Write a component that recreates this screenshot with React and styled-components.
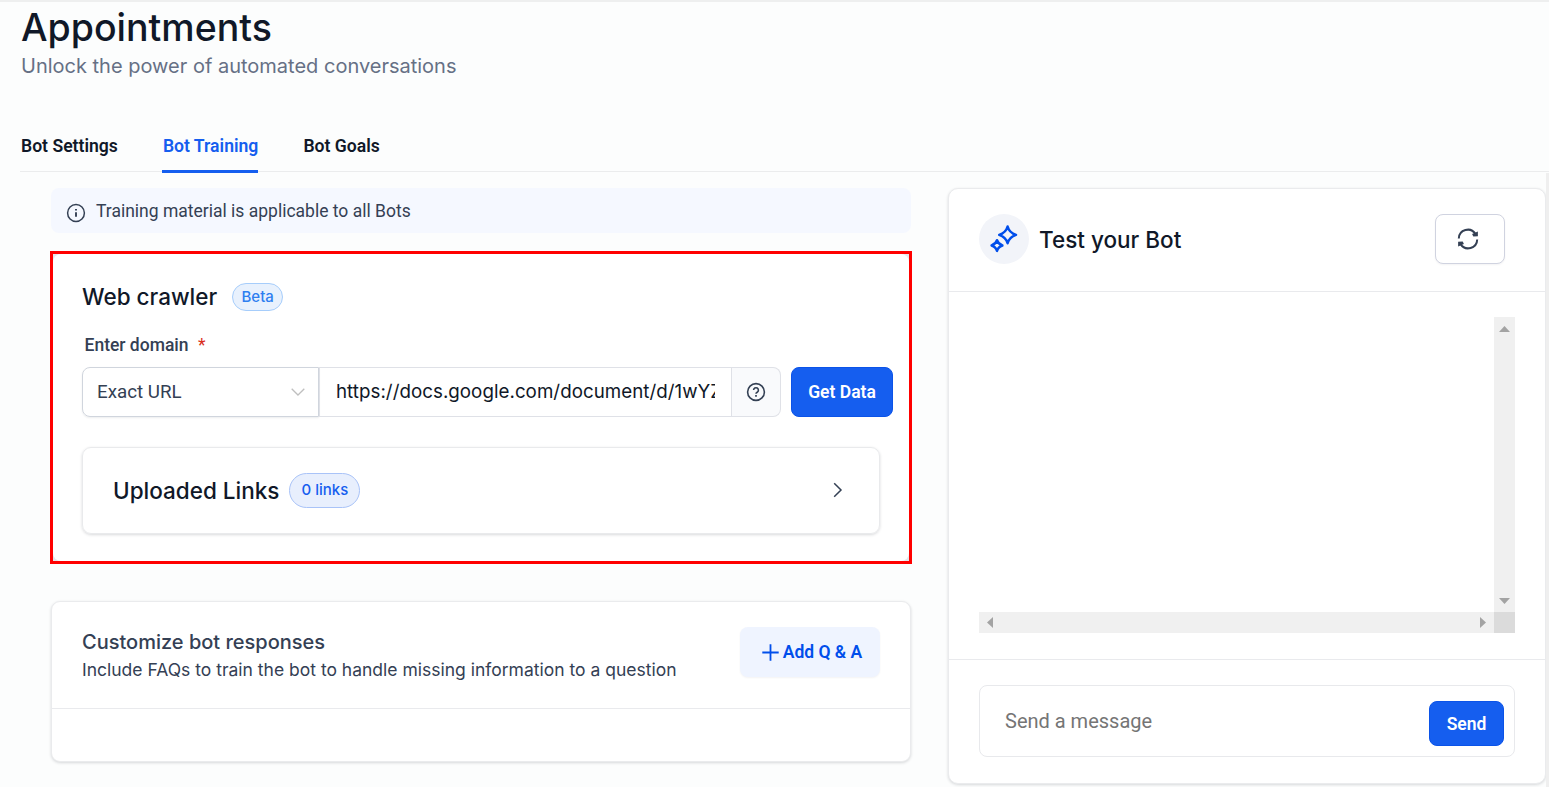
import React, { useState } from "react";
import styled, { createGlobalStyle } from "styled-components";

const TABS = ["Bot Settings", "Bot Training", "Bot Goals"];

function App() {
    const [activeTab, setActiveTab] = useState("Bot Training");
    const [message, setMessage] = useState("");

    return (
        <Page>
            <GlobalStyle />
            <Header>
                <Title>Appointments</Title>
                <Subtitle>Unlock the power of automated conversations</Subtitle>
            </Header>
            <TabBar>
                {TABS.map((tab) => (
                    <Tab
                        key={tab}
                        $active={tab === activeTab}
                        onClick={() => setActiveTab(tab)}
                    >
                        {tab}
                    </Tab>
                ))}
            </TabBar>
            <Content>
                <TrainingColumn>
                    <Notice>
                        <InfoIcon />
                        <span>Training material is applicable to all Bots</span>
                    </Notice>
                    <Highlight>
                        <CrawlerCard>
                            <CrawlerHeading>
                                <SectionTitle>Web crawler</SectionTitle>
                                <BetaBadge>Beta</BetaBadge>
                            </CrawlerHeading>
                            <FieldLabel>
                                Enter domain <Required>*</Required>
                            </FieldLabel>
                            <DomainRow>
                                <Select>
                                    <span>Exact URL</span>
                                    <ChevronDown />
                                </Select>
                                <UrlBox>
                                    <UrlInput
                                        readOnly
                                        value="https://docs.google.com/document/d/1wYZ"
                                    />
                                </UrlBox>
                                <HelpButton>
                                    <HelpIcon />
                                </HelpButton>
                                <GetDataButton>Get Data</GetDataButton>
                            </DomainRow>
                            <LinksCard>
                                <SectionTitle>Uploaded Links</SectionTitle>
                                <LinksBadge>0 links</LinksBadge>
                                <ChevronRight />
                            </LinksCard>
                        </CrawlerCard>
                    </Highlight>
                    <ResponsesCard>
                        <ResponsesHeader>
                            <div>
                                <ResponsesTitle>Customize bot responses</ResponsesTitle>
                                <ResponsesText>
                                    Include FAQs to train the bot to handle missing
                                    information to a question
                                </ResponsesText>
                            </div>
                            <AddButton>
                                <PlusIcon />
                                <span>Add Q &amp; A</span>
                            </AddButton>
                        </ResponsesHeader>
                    </ResponsesCard>
                </TrainingColumn>
                <TestPanel>
                    <PanelHeader>
                        <SparkleCircle>
                            <SparkleIcon />
                        </SparkleCircle>
                        <PanelTitle>Test your Bot</PanelTitle>
                        <RefreshButton>
                            <RefreshIcon />
                        </RefreshButton>
                    </PanelHeader>
                    <PanelBody>
                        <ChatArea>
                            <ChatView />
                            <ScrollTrack $vertical>
                                <Arrow direction="up" />
                                <Arrow direction="down" />
                            </ScrollTrack>
                            <ScrollTrack>
                                <Arrow direction="left" />
                                <Arrow direction="right" />
                            </ScrollTrack>
                            <ScrollCorner />
                        </ChatArea>
                    </PanelBody>
                    <PanelFooter>
                        <MessageBox>
                            <MessageInput
                                placeholder="Send a message"
                                value={message}
                                onChange={(e) => setMessage(e.target.value)}
                            />
                            <SendButton>Send</SendButton>
                        </MessageBox>
                    </PanelFooter>
                </TestPanel>
                <PageTrack />
            </Content>
        </Page>
    );
}

const InfoIcon = () => (
    <svg width="20" height="20" viewBox="0 0 20 20" fill="none" stroke="#344054">
        <circle cx="10" cy="10" r="8.4" strokeWidth="1.5" />
        <path d="M10 9.2v4.6" strokeWidth="1.9" />
        <path d="M10 5.9v1.6" strokeWidth="1.9" />
    </svg>
);

const HelpIcon = () => (
    <svg
        width="20"
        height="20"
        viewBox="0 0 20 20"
        fill="none"
        stroke="#344054"
        strokeWidth="1.6"
    >
        <circle cx="10" cy="10" r="8.4" />
        <path d="M7.6 8.1a2.4 2.4 0 1 1 3.6 2.1c-.8.45-1.2.8-1.2 1.6" />
        <path d="M10 13.1v1.6" strokeWidth="1.7" />
    </svg>
);

const ChevronDown = () => (
    <svg width="14" height="8" viewBox="0 0 14 8" fill="none" stroke="#bfbfbf" strokeWidth="1.3">
        <path d="M.7.7 7 7 13.3.7" />
    </svg>
);

const ChevronRight = () => (
    <svg width="10" height="16" viewBox="0 0 10 16" fill="none" stroke="#344054" strokeWidth="1.5">
        <path d="M1.2 1.2 8 8l-6.8 6.8" />
    </svg>
);

const PlusIcon = () => (
    <svg width="17" height="17" viewBox="0 0 17 17" stroke="#004eeb" strokeWidth="1.8">
        <path d="M8.5.3v16.4M.3 8.5h16.4" />
    </svg>
);

const SparkleIcon = () => (
    <svg
        width="30"
        height="30"
        viewBox="0 0 30 30"
        fill="none"
        stroke="#004eeb"
        strokeWidth="2.5"
        strokeLinejoin="round"
    >
        <path d="M18.6 2.5c1.2 4.5 3.5 6.8 8.4 8.4-4.9 1.6-7.2 3.9-8.4 8.4-1.2-4.5-3.5-6.8-8.4-8.4 4.9-1.6 7.2-3.9 8.4-8.4Z" />
        <path d="M8 16.2c.8 2.8 2.3 4.2 5.4 5.3-3.1 1.1-4.6 2.5-5.4 5.4-.8-2.9-2.3-4.3-5.4-5.4 3.1-1.1 4.6-2.5 5.4-5.3Z" />
    </svg>
);

const RefreshIcon = () => (
    <svg width="22" height="22" viewBox="0 0 22 22" fill="none" stroke="#344054" strokeWidth="2">
        <path d="M1.8 10.5a9 9 0 0 1 16.6-4.6" />
        <path d="M20.2 11.5a9 9 0 0 1-16.6 4.6" />
        <path d="M20.9 3.4v4.8l-4.6.2-1.2-2.4Z" fill="#344054" stroke="none" />
        <path d="M1.1 18.6v-4.8l4.6-.2 1.2 2.4Z" fill="#344054" stroke="none" />
    </svg>
);

const ARROWS = {
    up: [11, 6, "M0 6 5.5 0 11 6Z"],
    down: [11, 6, "M0 0h11L5.5 6Z"],
    left: [6, 11, "M6 0v11L0 5.5Z"],
    right: [6, 11, "M0 0v11l6-5.5Z"],
};

const Arrow = ({ direction }) => {
    const [width, height, d] = ARROWS[direction];
    return (
        <svg width={width} height={height} viewBox={`0 0 ${width} ${height}`}>
            <path d={d} fill="#a3a3a3" />
        </svg>
    );
};

const GlobalStyle = createGlobalStyle`
    * {
        box-sizing: border-box;
    }

    body {
        margin: 0;
        background: #fcfdfd;
        overflow: hidden;
    }

    h1, h2, h3, p {
        margin: 0;
        font-weight: 400;
    }

    button, input {
        margin: 0;
        padding: 0;
        border: 0;
        font: inherit;
    }

    svg {
        display: block;
        flex-shrink: 0;
    }
`;

const Page = styled.div`
    display: flex;
    flex-direction: column;
    width: 1549px;
    height: 787px;
    border-top: 2px solid #eeefef;
    overflow: hidden;
    font-family: Inter, sans-serif;
    color: #101828;
`;

const Header = styled.header`
    flex-shrink: 0;
    height: 117px;
    padding: 3px 0 0 21px;
`;

const Title = styled.h1`
    margin-bottom: 1px;
    font-size: 37.5px;
    font-weight: 500;
    line-height: 45px;
`;

const Subtitle = styled.p`
    font-size: 20px;
    line-height: 30px;
    color: #667085;
`;

const TabBar = styled.nav`
    display: flex;
    flex-shrink: 0;
    gap: 44px;
    height: 53px;
    margin-left: 20px;
    box-shadow: inset 0 -1px #ebeced;
`;

const Tab = styled.button`
    height: 54px;
    padding: 3px 0 0 1px;
    background: none;
    border-bottom: 3px solid ${({ $active }) => ($active ? "#155eef" : "transparent")};
    color: ${({ $active }) => ($active ? "#155eef" : "#101828")};
    font-family: Roboto, sans-serif;
    font-size: 17.6px;
    font-weight: 600;
    white-space: nowrap;
`;

const Content = styled.main`
    display: flex;
    flex: 1;
    align-items: flex-start;
    padding: 16px 0 0 51px;
`;

const TrainingColumn = styled.section`
    width: 860px;
    margin-right: 37px;
`;

const Notice = styled.div`
    display: flex;
    align-items: center;
    gap: 10px;
    height: 45px;
    padding-left: 15px;
    border-radius: 8px;
    background: #f5f8ff;
    color: #344054;
    font-family: Roboto, sans-serif;
    font-size: 17.5px;

    svg {
        margin-top: 5px;
    }
`;

const Highlight = styled.div`
    width: 862px;
    height: 313px;
    margin: 18px 0 37px -1px;
    border: 3px solid #ff0000;
    background: #e4e7ec;
`;

const CrawlerCard = styled.div`
    height: 307px;
    padding: 29px 0 0 29px;
    border-radius: 8px;
    background: #fff;
`;

const CrawlerHeading = styled.div`
    display: flex;
    align-items: center;
    gap: 15px;
    height: 28px;
`;

const SectionTitle = styled.h2`
    font-size: 22.5px;
    font-weight: 500;
    line-height: 28px;
`;

const BetaBadge = styled.span`
    width: 51px;
    height: 28px;
    border: 1px solid #a6cdfb;
    border-radius: 14px;
    background: #e8f1fd;
    color: #2e7ff0;
    font-size: 15px;
    font-weight: 500;
    line-height: 26px;
    text-align: center;
`;

const FieldLabel = styled.label`
    display: block;
    margin: 22px 0 9px 2.5px;
    color: #344054;
    font-family: Roboto, sans-serif;
    font-size: 17.5px;
    font-weight: 500;
    line-height: 25px;
`;

const Required = styled.span`
    margin-left: 5px;
    color: #d92d20;
    font-weight: 400;
`;

const DomainRow = styled.div`
    display: flex;
    height: 50px;
`;

const Select = styled.div`
    display: flex;
    align-items: center;
    justify-content: space-between;
    width: 237px;
    padding: 0 13px 0 14px;
    border: 1px solid #d0d5dd;
    border-radius: 8px 0 0 8px;
    box-shadow: 0 1px 2px rgba(16, 24, 40, 0.08);
    color: #344054;
    font-family: Roboto, sans-serif;
    font-size: 18.75px;
`;

const UrlBox = styled.div`
    width: 413px;
    padding: 0 16px;
    border: 1px solid #dfe1e7;
`;

const UrlInput = styled.input`
    width: 379px;
    height: 48px;
    padding-bottom: 2px;
    background: none;
    color: #101828;
    font-size: 18.75px;
    letter-spacing: 0.03px;
    outline: none;
`;

const HelpButton = styled.button`
    display: flex;
    align-items: center;
    justify-content: center;
    width: 49px;
    border: 1px solid #dfe1e7;
    border-left: 0;
    border-radius: 0 8px 8px 0;
    background: #f9fafc;
`;

const PrimaryButton = styled.button`
    border: 1px solid #0b53e8;
    border-radius: 8px;
    background: #155eef;
    color: #fff;
    font-family: Roboto, sans-serif;
    font-size: 17.5px;
    font-weight: 600;
    white-space: nowrap;
`;

const GetDataButton = styled(PrimaryButton)`
    width: 102px;
    height: 50px;
    margin-left: 10px;
`;

const LinksCard = styled.div`
    display: flex;
    align-items: center;
    width: 798px;
    height: 87px;
    margin-top: 30px;
    padding: 0 36px 0 30px;
    border: 1px solid #e9eaec;
    border-radius: 9px;
    box-shadow: 0 1px 3px rgba(16, 24, 40, 0.16);

    & > h2 {
        padding-top: 1px;
    }

    & > svg {
        margin: 0 0 1px auto;
    }
`;

const LinksBadge = styled.span`
    width: 71px;
    height: 35px;
    margin-left: 10px;
    border: 1px solid #a9c3f8;
    border-radius: 18px;
    background: #e8effd;
    color: #155eef;
    font-size: 15px;
    font-weight: 500;
    line-height: 32px;
    text-align: center;
`;

const ResponsesCard = styled.div`
    height: 161px;
    border: 1px solid #eaebed;
    border-radius: 9px;
    background: #fff;
    box-shadow: 0 1px 3px rgba(16, 24, 40, 0.16);
`;

const ResponsesHeader = styled.div`
    display: flex;
    justify-content: space-between;
    height: 107px;
    padding: 25px 30px 0;
    border-bottom: 1px solid #e9eaed;
    color: #344054;
`;

const ResponsesTitle = styled.h3`
    font-size: 20px;
    font-weight: 500;
    line-height: 30px;
`;

const ResponsesText = styled.p`
    font-size: 17.5px;
    line-height: 26px;
    white-space: nowrap;
`;

const AddButton = styled.button`
    display: flex;
    align-items: center;
    justify-content: center;
    gap: 4px;
    width: 140px;
    height: 50px;
    border-radius: 8px;
    background: #eff4ff;
    box-shadow: 0 1px 2px rgba(16, 24, 40, 0.05);
    color: #004eeb;
    font-family: Roboto, sans-serif;
    font-size: 17.5px;
    font-weight: 600;
    padding-left: 4px;
`;

const TestPanel = styled.aside`
    width: 598px;
    height: 596px;
    border: 1px solid #eaebed;
    border-radius: 10px;
    background: #fff;
    box-shadow: 0 1px 3px rgba(16, 24, 40, 0.16);
`;

const PanelHeader = styled.div`
    display: flex;
    align-items: center;
    height: 103px;
    padding: 0 40px 2px 30px;
    border-bottom: 1px solid #e9eaed;
`;

const SparkleCircle = styled.div`
    display: flex;
    align-items: center;
    justify-content: center;
    width: 50px;
    height: 50px;
    border-radius: 50%;
    background: #f2f4f9;
`;

const PanelTitle = styled.h2`
    margin-left: 10px;
    padding-top: 2px;
    font-size: 22.5px;
    font-weight: 500;
    line-height: 30px;
`;

const RefreshButton = styled.button`
    display: flex;
    align-items: center;
    justify-content: center;
    width: 70px;
    height: 50px;
    margin-left: auto;
    padding-right: 5px;
    border: 1px solid #d0d3e0;
    border-radius: 8px;
    background: #fff;
    box-shadow: 0 1px 2px rgba(16, 24, 40, 0.05);
`;

const PanelBody = styled.div`
    height: 368px;
    padding: 25px 30px 0;
    border-bottom: 1px solid #e9eaed;
`;

const ChatArea = styled.div`
    display: grid;
    grid-template-columns: 1fr 21px;
    grid-template-rows: 1fr 21px;
    height: 316px;
`;

const ChatView = styled.div`
    min-width: 0;
`;

const ScrollTrack = styled.div`
    display: flex;
    flex-direction: ${({ $vertical }) => ($vertical ? "column" : "row")};
    align-items: center;
    justify-content: space-between;
    padding: ${({ $vertical }) => ($vertical ? "9px 0 8px" : "0 8px")};
    background: #f0f0f0;
`;

const ScrollCorner = styled.div`
    background: #dbdbdb;
`;

const PanelFooter = styled.div`
    padding: 25px 30px;
`;

const MessageBox = styled.div`
    display: flex;
    align-items: center;
    height: 72px;
    padding: 4px 10px 0 25px;
    border: 1px solid #e8e9ec;
    border-radius: 8px;
`;

const MessageInput = styled.input`
    flex: 1;
    min-width: 0;
    height: 40px;
    margin-top: -5px;
    background: none;
    outline: none;
    font-family: Roboto, sans-serif;
    font-size: 20px;

    &::placeholder {
        color: #757575;
        opacity: 1;
    }
`;

const SendButton = styled(PrimaryButton)`
    width: 75px;
    height: 45px;
    padding-top: 2px;
`;

const PageTrack = styled.div`
    width: 3px;
    height: 615px;
    margin: -15px 0 0 auto;
    background: #efefef;
`;

export default App;
